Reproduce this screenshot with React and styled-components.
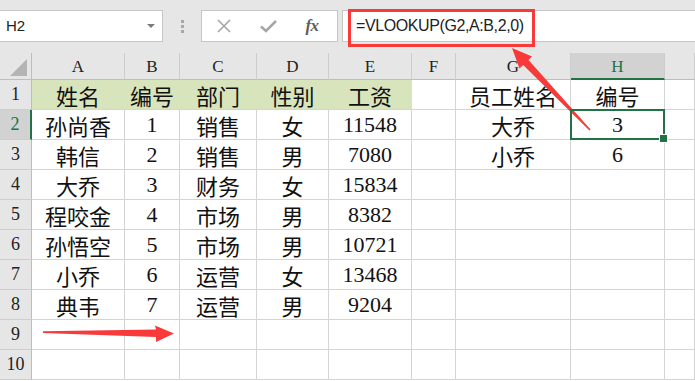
import styled, { createGlobalStyle } from "styled-components"

const GlobalStyle = createGlobalStyle`
    html, body {
        margin: 0;
        padding: 0;
        background: #fff;
        overflow: hidden;
    }
    * {
        box-sizing: border-box;
    }
`

const Tela = styled.div`
    position: relative;
    width: 695px;
    height: 381px;
    overflow: hidden;
    background: #fff;
`

const BarraFormula = styled.div`
    display: flex;
    align-items: flex-start;
    height: 53px;
    padding-top: 10px;
    background: #e6e6e6;
`

const CaixaNome = styled.div`
    width: 163px;
    height: 32px;
    background: #fff;
    border: 1px solid #c6c6c6;
    border-left: none;
    font-family: "Liberation Sans", Arial, sans-serif;
    font-size: 15px;
    color: #222;
    line-height: 30px;
    padding-left: 6px;
    padding-right: 7px;
    display: flex;
    justify-content: space-between;
    align-items: center;
`

const Seta = styled.span`
    width: 0;
    height: 0;
    border-left: 4px solid transparent;
    border-right: 4px solid transparent;
    border-top: 4px solid #7a7a7a;
`

const Alca = styled.div`
    width: 38px;
    height: 32px;
    display: flex;
    flex-direction: column;
    align-items: center;
    justify-content: center;
    gap: 2px;
`

const Ponto = styled.span`
    width: 3px;
    height: 3px;
    background: #a8a8a8;
`

const CaixaBotoes = styled.div`
    width: 137px;
    height: 32px;
    background: #fff;
    border: 1px solid #c6c6c6;
    display: flex;
    align-items: center;
`

const Botao = styled.div`
    width: 44px;
    height: 30px;
    display: flex;
    align-items: center;
    justify-content: center;
    color: #a6a6a6;
`

const Fx = styled.span`
    font-family: "Liberation Serif", "Times New Roman", serif;
    font-style: italic;
    font-weight: bold;
    font-size: 17px;
    color: #606060;
    letter-spacing: -0.5px;
`

const CaixaFormula = styled.div`
    flex: 1;
    margin-left: 4px;
    height: 32px;
    background: #fff;
    border: 1px solid #c6c6c6;
    border-right: none;
    font-family: "Liberation Sans", Arial, sans-serif;
    font-size: 16px;
    letter-spacing: -0.4px;
    color: #222;
    line-height: 30px;
    padding-left: 13px;
`

const Planilha = styled.div`
    display: grid;
    grid-template-columns: 32px 93px 55px 77px 72px 83px 44px 115px 94px 1fr;
    grid-template-rows: 27px repeat(10, 30px);
`

const Canto = styled.div`
    position: relative;
    background: #e6e6e6;
    border-right: 1px solid #bdbdbd;
    border-bottom: 1px solid #bdbdbd;

    &::after {
        content: "";
        position: absolute;
        right: 4px;
        bottom: 3px;
        width: 0;
        height: 0;
        border-left: 17px solid transparent;
        border-bottom: 17px solid #b4b4b4;
    }
`

const CabecalhoColuna = styled.div`
    background: ${(p) => (p.$ativo ? "#d2d2d2" : "#e6e6e6")};
    border-right: 1px solid #cdcdcd;
    border-bottom: ${(p) => (p.$ativo ? "2px solid #217346" : "1px solid #bdbdbd")};
    color: ${(p) => (p.$ativo ? "#217346" : "#222")};
    font-family: "Liberation Serif", "Times New Roman", serif;
    font-size: 17px;
    display: flex;
    align-items: center;
    justify-content: center;
    padding-top: 2px;
`

const CabecalhoLinha = styled.div`
    background: ${(p) => (p.$ativo ? "#d2d2d2" : "#e6e6e6")};
    border-right: ${(p) => (p.$ativo ? "2px solid #217346" : "1px solid #bdbdbd")};
    border-bottom: 1px solid #cdcdcd;
    color: ${(p) => (p.$ativo ? "#217346" : "#222")};
    font-family: "Liberation Serif", "Times New Roman", serif;
    font-size: 18px;
    display: flex;
    align-items: center;
    justify-content: center;
`

const Celula = styled.div`
    position: relative;
    background: ${(p) => (p.$verde ? "#d8e4bc" : "#fff")};
    border-right: 1px solid ${(p) => (p.$verde ? "#d8e4bc" : "#d4d4d4")};
    border-bottom: 1px solid #d4d4d4;
    font-family: "Liberation Serif", "Noto Sans CJK SC", serif;
    font-size: 22px;
    color: #111;
    display: flex;
    align-items: center;
    justify-content: center;
    white-space: nowrap;

    ${(p) =>
        p.$selecionada &&
        `
        &::after {
            content: "";
            position: absolute;
            top: -1px;
            left: -1px;
            right: -1px;
            bottom: -1px;
            border: 2px solid #217346;
            z-index: 2;
        }
        &::before {
            content: "";
            position: absolute;
            right: -4px;
            bottom: -4px;
            width: 7px;
            height: 7px;
            background: #217346;
            border: 1px solid #fff;
            z-index: 3;
        }
    `}
`

const Marcacao = styled.div`
    position: absolute;
    left: 348px;
    top: 9px;
    width: 187px;
    height: 38px;
    border: 3px solid #f83a3a;
    pointer-events: none;
`

const Desenho = styled.svg`
    position: absolute;
    left: 0;
    top: 0;
    pointer-events: none;
`

// a coluna I fica cortada na borda, sem letra visível
const colunas = ["A", "B", "C", "D", "E", "F", "G", "H", ""]

const dados = [
    ["姓名", "编号", "部门", "性别", "工资", "", "员工姓名", "编号", ""],
    ["孙尚香", "1", "销售", "女", "11548", "", "大乔", "3", ""],
    ["韩信", "2", "销售", "男", "7080", "", "小乔", "6", ""],
    ["大乔", "3", "财务", "女", "15834", "", "", "", ""],
    ["程咬金", "4", "市场", "男", "8382", "", "", "", ""],
    ["孙悟空", "5", "市场", "男", "10721", "", "", "", ""],
    ["小乔", "6", "运营", "女", "13468", "", "", "", ""],
    ["典韦", "7", "运营", "男", "9204", "", "", "", ""],
    ["", "", "", "", "", "", "", "", ""],
    ["", "", "", "", "", "", "", "", ""],
]

const App = () => {
    return (
        <Tela>
            <GlobalStyle />
            <BarraFormula>
                <CaixaNome>
                    H2
                    <Seta />
                </CaixaNome>
                <Alca>
                    <Ponto />
                    <Ponto />
                    <Ponto />
                </Alca>
                <CaixaBotoes>
                    <Botao>
                        <svg width="14" height="14" viewBox="0 0 14 14">
                            <path d="M1 1 L13 13 M13 1 L1 13" stroke="currentColor" strokeWidth="1.6" fill="none" />
                        </svg>
                    </Botao>
                    <Botao>
                        <svg width="17" height="14" viewBox="0 0 17 14">
                            <path d="M1 7.5 L6 12 L16 2" stroke="currentColor" strokeWidth="2.6" fill="none" />
                        </svg>
                    </Botao>
                    <Botao>
                        <Fx>fx</Fx>
                    </Botao>
                </CaixaBotoes>
                <CaixaFormula>=VLOOKUP(G2,A:B,2,0)</CaixaFormula>
            </BarraFormula>

            <Planilha>
                <Canto />
                {colunas.map((c, j) => (
                    <CabecalhoColuna key={"c" + j} $ativo={c === "H"}>
                        {c}
                    </CabecalhoColuna>
                ))}
                {dados.map((linha, i) => [
                    <CabecalhoLinha key={"l" + i} $ativo={i === 1}>
                        {i + 1}
                    </CabecalhoLinha>,
                    ...linha.map((valor, j) => (
                        <Celula
                            key={i + "-" + j}
                            $verde={i === 0 && j < 5}
                            $selecionada={i === 1 && j === 7}
                        >
                            {valor}
                        </Celula>
                    )),
                ])}
            </Planilha>

            <Marcacao />
            <Desenho width="695" height="381">
                <polygon
                    fill="#f83a3a"
                    points="43,331.3 156,329.5 155,325.5 174,333.5 156,342 156,337 43,333"
                />
                <polygon
                    fill="#f83a3a"
                    points="512,48 532,56.5 528.5,60 590.6,129.4 589.4,130.6 523.2,65 519.5,68.5"
                />
            </Desenho>
        </Tela>
    )
}

export default App
